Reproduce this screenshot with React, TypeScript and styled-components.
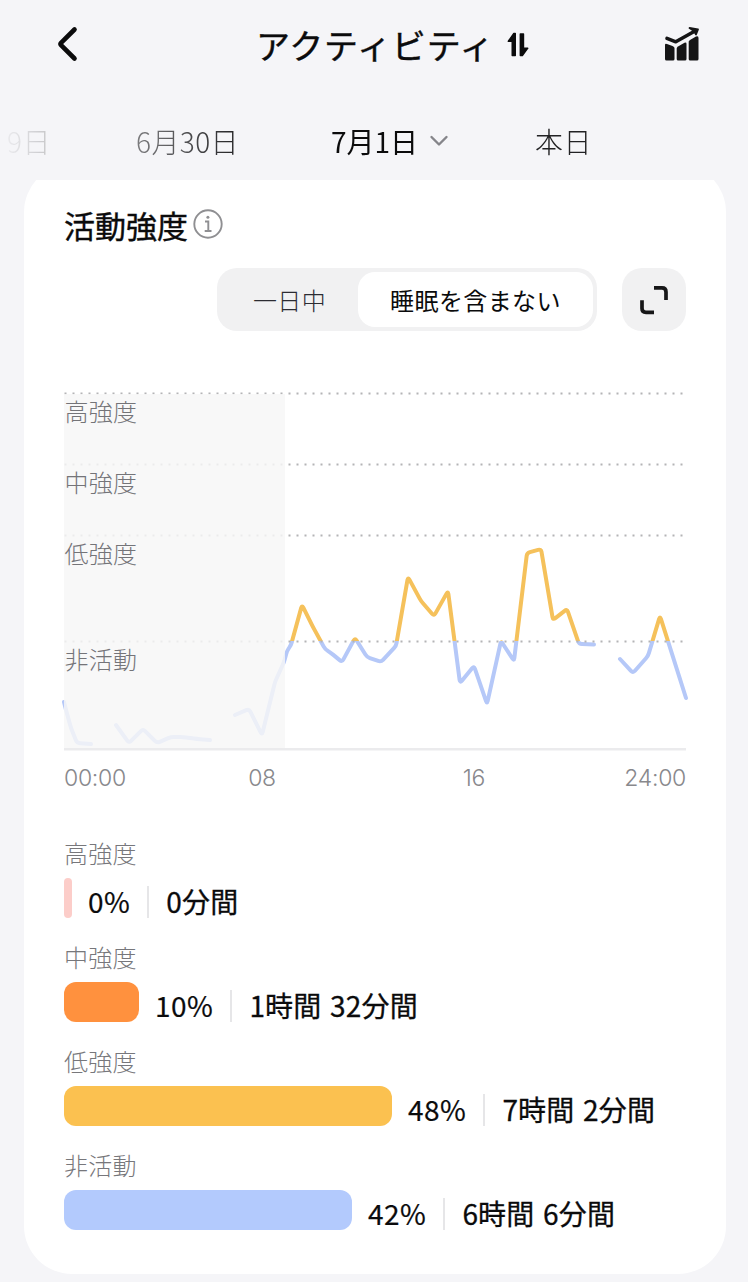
import styled, { createGlobalStyle } from "styled-components";

interface Level {
  name: string;
  color: string;
  width: number;
  percent: string;
  time: string;
}

const levels: Level[] = [
  { name: "高強度", color: "#fccdc9", width: 8, percent: "0%", time: "0分間" },
  { name: "中強度", color: "#ff913e", width: 75, percent: "10%", time: "1時間 32分間" },
  { name: "低強度", color: "#fbc150", width: 328, percent: "48%", time: "7時間 2分間" },
  { name: "非活動", color: "#b3cafd", width: 288, percent: "42%", time: "6時間 6分間" },
];

type Point = [number, number];

const series: Point[][] = [
  [[0, 321], [2, 329], [7, 347], [13, 362], [27, 363]],
  [[52, 344], [65, 362], [79, 348], [93, 362], [107, 356], [119, 356], [133, 358], [146, 359]],
  [
    [171, 334], [185, 328], [198, 354], [211, 301], [220, 281], [223, 270], [227, 264],
    [238, 224], [249, 246], [261, 268], [267, 272], [278, 281], [291, 257], [303, 276],
    [317, 281], [332, 265], [344, 196], [357, 220], [370, 235], [384, 210], [396, 302],
    [410, 285], [423, 323], [437, 260], [450, 280], [463, 172], [477, 168], [489, 239],
    [503, 228], [515, 263], [530, 263.5],
  ],
  [[556, 278], [569, 292], [584, 275], [596, 235], [622, 317]],
];

const gridLines = [12.5, 83.5, 154.5, 260.5];
const gridLabels = ["高強度", "中強度", "低強度", "非活動"];

// straight segments with a small rounded corner at each point
function toPath(points: Point[], radius = 3) {
  let d = `M${points[0].join(" ")}`;
  for (let i = 1; i < points.length - 1; i++) {
    const [x, y] = points[i];
    const [px, py] = points[i - 1];
    const [nx, ny] = points[i + 1];
    const before = Math.hypot(x - px, y - py);
    const after = Math.hypot(nx - x, ny - y);
    const a = Math.min(radius, before / 2) / before;
    const b = Math.min(radius, after / 2) / after;
    d += `L${x + (px - x) * a} ${y + (py - y) * a}Q${x} ${y} ${x + (nx - x) * b} ${y + (ny - y) * b}`;
  }
  return `${d}L${points[points.length - 1].join(" ")}`;
}

function IntensityChart() {
  const d = series.map((points) => toPath(points)).join("");

  return (
    <Chart viewBox="-4 0 630 420">
      <defs>
        <clipPath id="low"><rect x="-4" y="0" width="630" height="260" /></clipPath>
        <clipPath id="inactive"><rect x="-4" y="260" width="630" height="120" /></clipPath>
      </defs>
      <line x1="0" x2="622" y1="368.2" y2="368.2" stroke="#ebebed" strokeWidth="2.6" />
      <g fill="none" strokeWidth="4" strokeLinecap="round" strokeLinejoin="round">
        <path d={d} stroke="#f5c15b" clipPath="url(#low)" />
        <path d={d} stroke="#b5c8f8" clipPath="url(#inactive)" />
      </g>
      {gridLines.map((y) => (
        <line key={y} x1="0.5" x2="619" y1={y} y2={y} stroke="#b4b4b6" strokeWidth="2" strokeDasharray="2 6" />
      ))}
      <rect x="0" y="13" width="221" height="354" fill="#f7f7f7" fillOpacity="0.83" />
      {gridLines.map((y, i) => (
        <ChartLabel key={y} x="0.5" y={y + 27.5}>{gridLabels[i]}</ChartLabel>
      ))}
      <AxisLabel x="0" y="405">00:00</AxisLabel>
      <AxisLabel x="198" y="405" textAnchor="middle">08</AxisLabel>
      <AxisLabel x="410" y="405" textAnchor="middle">16</AxisLabel>
      <AxisLabel x="622" y="405" textAnchor="end">24:00</AxisLabel>
    </Chart>
  );
}

function App() {
  return (
    <Page>
      <GlobalStyle />
      <Header>
        <svg width="22" height="38" viewBox="0 0 22 38" fill="none" stroke="#0b0b0c" strokeWidth="4.6" strokeLinecap="round" strokeLinejoin="round">
          <path d="M18.500 4.500L4.800 18.200Q4 19 4.800 19.800L18.500 33.500" />
        </svg>
        <Title>
          アクティビティ
          <svg width="22" height="26" viewBox="0 0 22 26" fill="#0b0b0c" stroke="#0b0b0c" strokeLinejoin="round">
            <path strokeWidth="1.4" d="M8.300 1.500V23.500H5.200V9.300H1.200L6.800 1.500Z M13.300 2V23.500H15.400L20.800 16.200H16.500V2Z" />
          </svg>
        </Title>
        <svg width="36" height="36" viewBox="0 0 36 36" fill="#151516">
          <path d="M1 19Q1 17 3 18L8.500 20Q10.500 21 10.500 22V33Q10.500 34.500 9 34.500H2.500Q1 34.500 1 33Z" />
          <path d="M12.700 22.500Q12.700 21.500 14 20.500L20.500 16.800Q22.500 16 22.500 18V33Q22.500 34.500 21 34.500H14.200Q12.700 34.500 12.700 33Z" />
          <path d="M24.700 15.800Q24.700 14.800 26 13.900L32 10.500Q34.500 9.300 34.500 12V33Q34.500 34.500 33 34.500H26.200Q24.700 34.500 24.700 33Z" />
          <path d="M3 12.300L11.800 15.800L31 5" fill="none" stroke="#151516" strokeWidth="3.600" strokeLinecap="round" strokeLinejoin="round" />
          <path d="M25.500 1.900L34 3.500L32 8.500L30 5Z" stroke="#151516" strokeWidth="1.800" strokeLinejoin="round" />
        </svg>
      </Header>

      <Days>
        <Day>9日</Day>
        <Day>6月30日</Day>
        <Day $active>
          7月1日
          <svg width="20" height="14" viewBox="0 0 20 14" fill="none" stroke="#85858a" strokeWidth="2.4" strokeLinecap="round" strokeLinejoin="round">
            <path d="M2.500 3L10 10.500L17.500 3" />
          </svg>
        </Day>
        <Day>本日</Day>
      </Days>

      <Scroll>
        <Card>
          <CardTitle>
            活動強度
            <svg width="30" height="30" viewBox="0 0 30 30" fill="none" stroke="#8f8f92" strokeWidth="1.900">
              <circle cx="15" cy="15" r="13.700" />
              <path d="M12 12.500H15.300V22M11.700 22H18.500" />
              <circle cx="14.900" cy="8.300" r="1.500" fill="#8f8f92" stroke="none" />
            </svg>
          </CardTitle>
          <Controls>
            <Switch>
              <Option>一日中</Option>
              <Option $active>睡眠を含まない</Option>
            </Switch>
            <ExpandButton aria-label="拡大">
              <svg width="30" height="30" viewBox="0 0 30 30" fill="none" stroke="#171718" strokeWidth="3.700">
                <path d="M15 2.900H23Q27 2.900 27 7V15M3 15.300V23.500Q3 27.300 7 27.300H15" />
              </svg>
            </ExpandButton>
          </Controls>
          <IntensityChart />
          <Levels>
            {levels.map((level) => (
              <li key={level.name}>
                <LevelName>{level.name}</LevelName>
                <LevelRow>
                  <Bar $color={level.color} style={{ width: level.width }} />
                  <Percent>{level.percent}</Percent>
                  <Time>{level.time}</Time>
                </LevelRow>
              </li>
            ))}
          </Levels>
        </Card>
      </Scroll>
    </Page>
  );
}

const GlobalStyle = createGlobalStyle`
  * {
    box-sizing: border-box;
    margin: 0;
    padding: 0;
  }

  body {
    background-color: #f5f5f8;
    color: #0b0b0c;
    font-family: "Noto Sans CJK JP", sans-serif;
    overflow: hidden;
  }

  svg {
    display: block;
    flex-shrink: 0;
  }
`;

const Page = styled.main`
  width: 748px;
  height: 1282px;
  overflow: hidden;
`;

const Header = styled.header`
  display: grid;
  grid-template-columns: 200px 1fr 36px;
  align-items: center;
  height: 88px;
  padding: 0 48px 0 56px;
`;

const Title = styled.h1`
  display: flex;
  align-items: center;
  gap: 12px;
  padding-top: 2px;
  font-size: 34px;
  font-weight: 400;
  line-height: 50px;
  letter-spacing: 0.9px;
  -webkit-text-stroke: 0.4px #0b0b0c;
`;

const Days = styled.nav`
  display: grid;
  grid-template-columns: 136px 195px 204px auto;
  height: 92px;
  padding-top: 32px;
  mask-image: linear-gradient(90deg, transparent -5px, #000 240px);
`;

const Day = styled.span<{ $active?: boolean }>`
  display: flex;
  align-items: center;
  gap: 11px;
  height: 42px;
  font-size: 28px;
  font-weight: ${(props) => (props.$active ? 400 : 300)};
  letter-spacing: ${(props) => (props.$active ? 0 : "0.4px")};
  color: ${(props) => (props.$active ? "#0b0b0c" : "#222224")};

  &:first-child {
    padding-left: 7px;
  }
`;

const Scroll = styled.div`
  height: 1102px;
  padding: 0 22px 0 24px;
  overflow: hidden;
`;

const Card = styled.section`
  height: 1110px;
  margin-top: -16px;
  padding: 36px 40px 0;
  border-radius: 48px;
  background-color: #fff;
`;

const CardTitle = styled.h2`
  display: flex;
  align-items: center;
  gap: 5px;
  height: 48px;
  font-size: 31px;
  font-weight: 400;
  -webkit-text-stroke: 0.4px #0b0b0c;
`;

const Controls = styled.div`
  display: flex;
  justify-content: flex-end;
  gap: 25px;
  height: 63px;
  margin-top: 20px;
`;

const Switch = styled.div`
  display: flex;
  width: 380px;
  padding: 4px;
  border-radius: 20px;
  background-color: #f1f1f2;
`;

const Option = styled.button<{ $active?: boolean }>`
  flex: ${(props) => (props.$active ? "0 0 235px" : "1")};
  border: none;
  border-radius: 17px;
  background-color: ${(props) => (props.$active ? "#fff" : "transparent")};
  color: ${(props) => (props.$active ? "#0b0b0c" : "#2c2c32")};
  font: ${(props) => (props.$active ? 400 : 300)} 24px "Noto Sans CJK JP", sans-serif;
  letter-spacing: 0.4px;
`;

const ExpandButton = styled.button`
  display: flex;
  align-items: center;
  justify-content: center;
  width: 64px;
  border: none;
  border-radius: 20px;
  background-color: #f1f1f2;
`;

const Chart = styled.svg`
  width: 630px;
  height: 420px;
  margin: 50px 0 0 -4px;
`;

const ChartLabel = styled.text`
  font-size: 24px;
  font-weight: 300;
  letter-spacing: 0.2px;
  fill: #747478;
`;

const AxisLabel = styled.text`
  font: 350 23px Inter, sans-serif;
  letter-spacing: -0.3px;
  fill: #88888c;
`;

const Levels = styled.ul`
  display: grid;
  gap: 21px;
  margin-top: 34px;
  list-style: none;
`;

const LevelName = styled.p`
  height: 43px;
  font-size: 24px;
  font-weight: 300;
  line-height: 36px;
  letter-spacing: 0.3px;
  color: #77777b;
`;

const LevelRow = styled.div`
  display: flex;
  align-items: flex-end;
  height: 40px;
`;

const Bar = styled.div<{ $color: string }>`
  height: 40px;
  border-radius: 12px;
  background-color: ${(props) => props.$color};
`;

const Percent = styled.span`
  height: 32px;
  padding: 0 17px 0 16px;
  border-right: 2px solid #e6e6e8;
  font-size: 28px;
  line-height: 30px;
  letter-spacing: 0.5px;
  -webkit-text-stroke: 0.2px #0b0b0c;
`;

const Time = styled.span`
  height: 32px;
  padding-left: 17px;
  font-size: 28px;
  line-height: 30px;
  letter-spacing: 0.2px;
  word-spacing: 2px;
  white-space: nowrap;
  -webkit-text-stroke: 0.3px #0b0b0c;
`;

export default App;
